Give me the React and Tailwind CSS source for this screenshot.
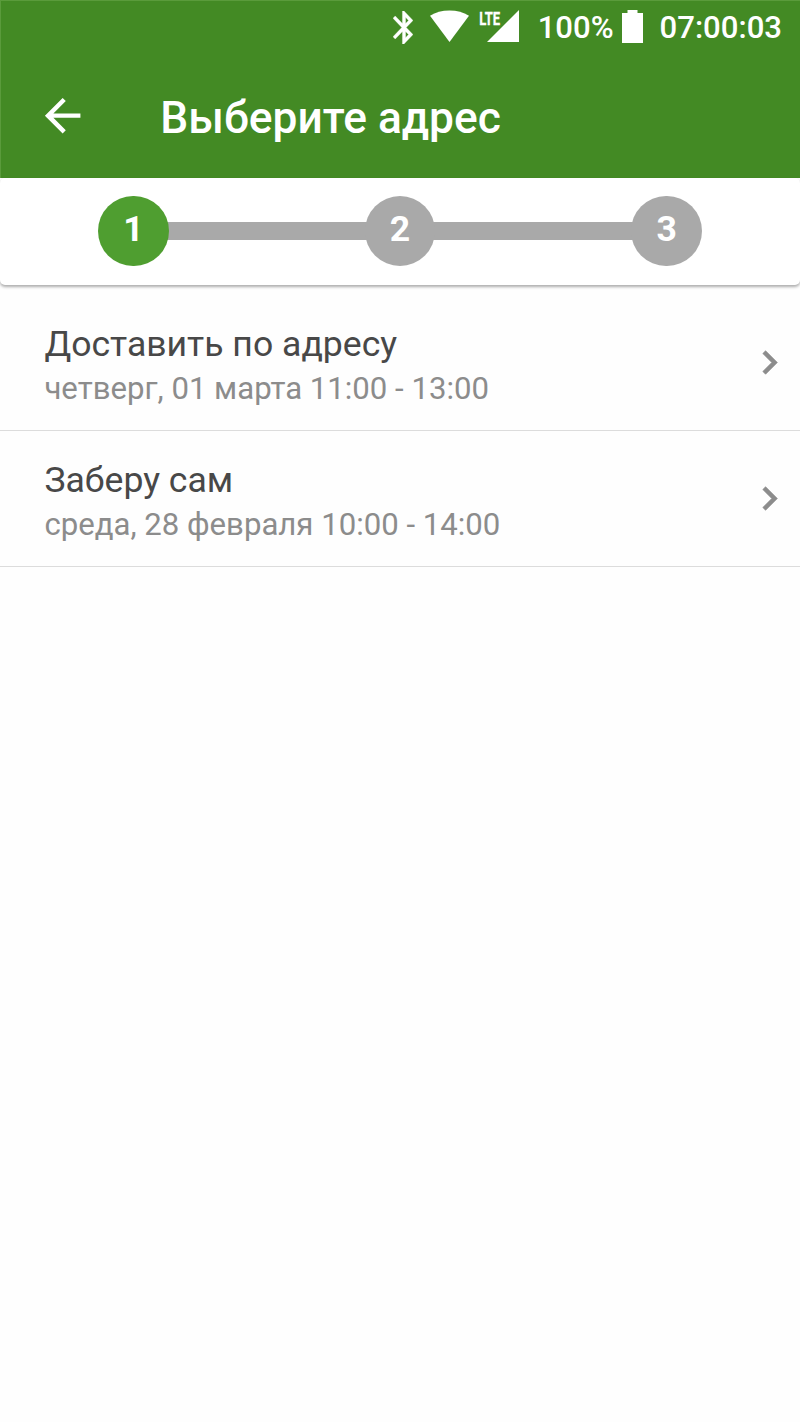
const steps = [1, 2, 3];

const options = [
  { id: 'delivery', title: 'Доставить по адресу', time: 'четверг, 01 марта 11:00 - 13:00' },
  { id: 'pickup', title: 'Заберу сам', time: 'среда, 28 февраля 10:00 - 14:00' },
];

function StatusBar() {
  return (
    <div className="flex h-[53px] items-start justify-end pr-[18px] text-[31.1px] leading-[36px] font-medium">
      {/* Bluetooth */}
      <svg className="mt-[9.5px] mr-[17px] h-[33px] w-5" viewBox="5 2 12.71 20" preserveAspectRatio="none" fill="currentColor" stroke="currentColor" strokeWidth="0.2">
        <path d="M17.71 7.71L12 2h-1v7.59L6.41 5 5 6.41 10.59 12 5 17.59 6.41 19 11 14.41V22h1l5.71-5.71-4.3-4.29 4.3-4.29zM13 5.83l1.88 1.88L13 9.59V5.83zm1.88 10.46L13 18.17v-3.76l1.88 1.88z" />
      </svg>
      {/* Wi-Fi */}
      <svg className="mt-[9px] mr-[9px] h-8 w-[39px]" viewBox="0 0 39 32" fill="currentColor">
        <path d="M0 5.8C5.6 2.2 12 .4 19.5.4S33.4 2.2 39 5.8L19.5 32z" />
      </svg>
      {/* Mobile signal */}
      <svg className="mt-[9px] mr-[19px] h-8 w-[41px] overflow-visible" viewBox="0 0 41 32" fill="currentColor">
        <path d="M41 0v32H9z" />
        <text x="1.2" y="14.8" fontFamily="Roboto, sans-serif" fontSize="18" fontWeight="700" stroke="currentColor" strokeWidth="0.3" textLength="21" lengthAdjust="spacingAndGlyphs">
          LTE
        </text>
      </svg>
      <span className="mt-[9px]">100%</span>
      {/* Battery */}
      <svg className="mt-[9px] mr-[17px] ml-2 h-[33px] w-[21px]" viewBox="0 0 21 33" fill="currentColor">
        <path d="M5.5 0h10v3H21v30H0V3h5.5z" />
      </svg>
      <span className="mt-[9px]">07:00:03</span>
    </div>
  );
}

function Header() {
  return (
    <header className="h-[178px] border-t border-l border-[#5a9b3b] bg-[#438a24] text-white">
      <StatusBar />
      <div className="flex h-[124px] items-center pl-[34.5px]">
        <svg className="h-[53.3px] w-[53.3px]" viewBox="0 0 24 24" fill="currentColor">
          <path d="M20 11H7.83l5.59-5.59L12 4l-8 8 8 8 1.41-1.41L7.83 13H20v-2z" />
        </svg>
        <h1 className="ml-[71.5px] pt-1 text-[44.3px] leading-[52px] font-medium">Выберите адрес</h1>
      </div>
    </header>
  );
}

function Stepper({ current }) {
  return (
    <div className="flex h-[107px] items-center justify-center rounded-[5px] bg-white pb-px shadow-[0_2px_3px_rgba(0,0,0,0.32)]">
      {steps.map((step) => (
        <div key={step} className="flex items-center">
          {step > 1 && <div className="-mx-1 h-[18px] w-[204px] bg-[#a9a9a9]" />}
          <div
            className={
              step === current
                ? 'z-10 flex h-[70.6px] w-[70.6px] items-center justify-center rounded-full bg-[#4f9e30] pb-[1.5px] text-[35.6px] leading-none font-bold text-white'
                : 'z-10 flex h-[70.6px] w-[70.6px] items-center justify-center rounded-full bg-[#a9a9a9] pb-[1.5px] text-[35.6px] leading-none font-bold text-white'
            }
          >
            {step}
          </div>
        </div>
      ))}
    </div>
  );
}

function OptionRow({ title, time }) {
  return (
    <button className="flex h-[136px] w-full items-center justify-between border-b border-[#dcdcdc] pr-[7px] pl-[44.4px] text-left">
      <div className="pt-[6px]">
        <div className="text-[35.6px] leading-[42px] text-[#484848]">{title}</div>
        <div className="mt-1 text-[31.15px] leading-[40px] text-[#8c8c8c]">{time}</div>
      </div>
      <svg className="h-[47px] w-[47px] text-[#8c8c8c]" viewBox="0 0 24 24" fill="currentColor" stroke="currentColor" strokeWidth="0.35">
        <path d="M10 6L8.59 7.41 13.17 12l-4.58 4.59L10 18l6-6z" />
      </svg>
    </button>
  );
}

export default function App() {
  return (
    <div className="min-h-[1422px] w-[800px] bg-[#fefefe] font-['Roboto','Noto_Sans',sans-serif]">
      <Header />
      <Stepper current={1} />
      <main className="pt-[10px]">
        {options.map((option) => (
          <OptionRow key={option.id} title={option.title} time={option.time} />
        ))}
      </main>
    </div>
  );
}
